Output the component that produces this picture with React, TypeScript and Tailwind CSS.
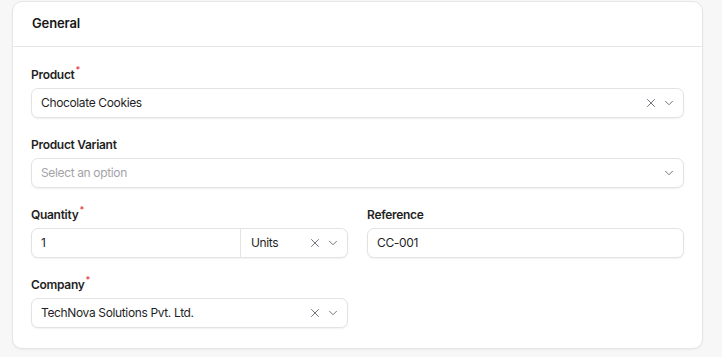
import { X, ChevronDown } from 'lucide-react';

function Label({ text, required }: { text: string; required?: boolean }) {
  return (
    <div className="h-4 mb-[5px] flex items-start text-[12px] leading-4 font-semibold tracking-[-0.025em] text-[#1f1f1f]">
      {text}
      {required && <span className="text-[#e5484d] text-[9px] leading-[9px] -mt-[2px] ml-px">*</span>}
    </div>
  );
}

function Icons({ clear = true }: { clear?: boolean }) {
  return (
    <div className="flex items-center gap-[4px] text-[#6b6b78]">
      {clear && <X size={14} strokeWidth={1.6} />}
      <ChevronDown size={14} strokeWidth={1.6} />
    </div>
  );
}

const box = 'h-[30px] rounded-[7px] border border-[#e3e3e3] bg-white shadow-[0_1px_2px_rgba(0,0,0,0.06)] flex items-center';
const txt = 'text-[12px] tracking-[-0.03em]';

function Select({ value, placeholder, clear = true }: { value?: string; placeholder?: string; clear?: boolean }) {
  return (
    <div className={`${box} pl-[9px] pr-[7px] justify-between`}>
      <span className={`${txt} ${value ? 'text-[#1f1f1f]' : 'text-[#a3a3a8]'}`}>{value ?? placeholder}</span>
      <Icons clear={clear} />
    </div>
  );
}

export default function App() {
  return (
    <div className="min-h-screen bg-[#f7f7f7] pl-[12px] pr-[19px] pt-px" style={{ fontFamily: 'Inter, "Noto Sans", sans-serif' }}>
      <div className="bg-white border border-[#e6e6e6] rounded-[10px] shadow-[0_1px_2px_rgba(0,0,0,0.05)]">
        <div className="h-[45px] border-b border-[#e6e6e6] flex items-center px-[19px]">
          <h2 className="text-[13px] font-semibold tracking-[-0.01em] text-[#171717]">General</h2>
        </div>
        <div className="px-[18px] pt-[20px] pb-[20px] flex flex-col gap-[19px]">
          <div>
            <Label text="Product" required />
            <Select value="Chocolate Cookies" />
          </div>
          <div>
            <Label text="Product Variant" />
            <Select placeholder="Select an option" clear={false} />
          </div>
          <div className="grid grid-cols-2 gap-[19px]">
            <div>
              <Label text="Quantity" required />
              <div className={box}>
                <span className={`flex-1 pl-[9px] ${txt} text-[#1f1f1f]`}>1</span>
                <div className="w-[107px] h-full border-l border-[#e3e3e3] flex items-center justify-between pl-[10px] pr-[7px]">
                  <span className={`${txt} text-[#1f1f1f]`}>Units</span>
                  <Icons />
                </div>
              </div>
            </div>
            <div>
              <Label text="Reference" />
              <div className={`${box} pl-[9px]`}>
                <span className={`${txt} text-[#1f1f1f]`}>CC-001</span>
              </div>
            </div>
          </div>
          <div className="grid grid-cols-2 gap-[19px]">
            <div>
              <Label text="Company" required />
              <Select value="TechNova Solutions Pvt. Ltd." />
            </div>
          </div>
        </div>
      </div>
    </div>
  );
}
